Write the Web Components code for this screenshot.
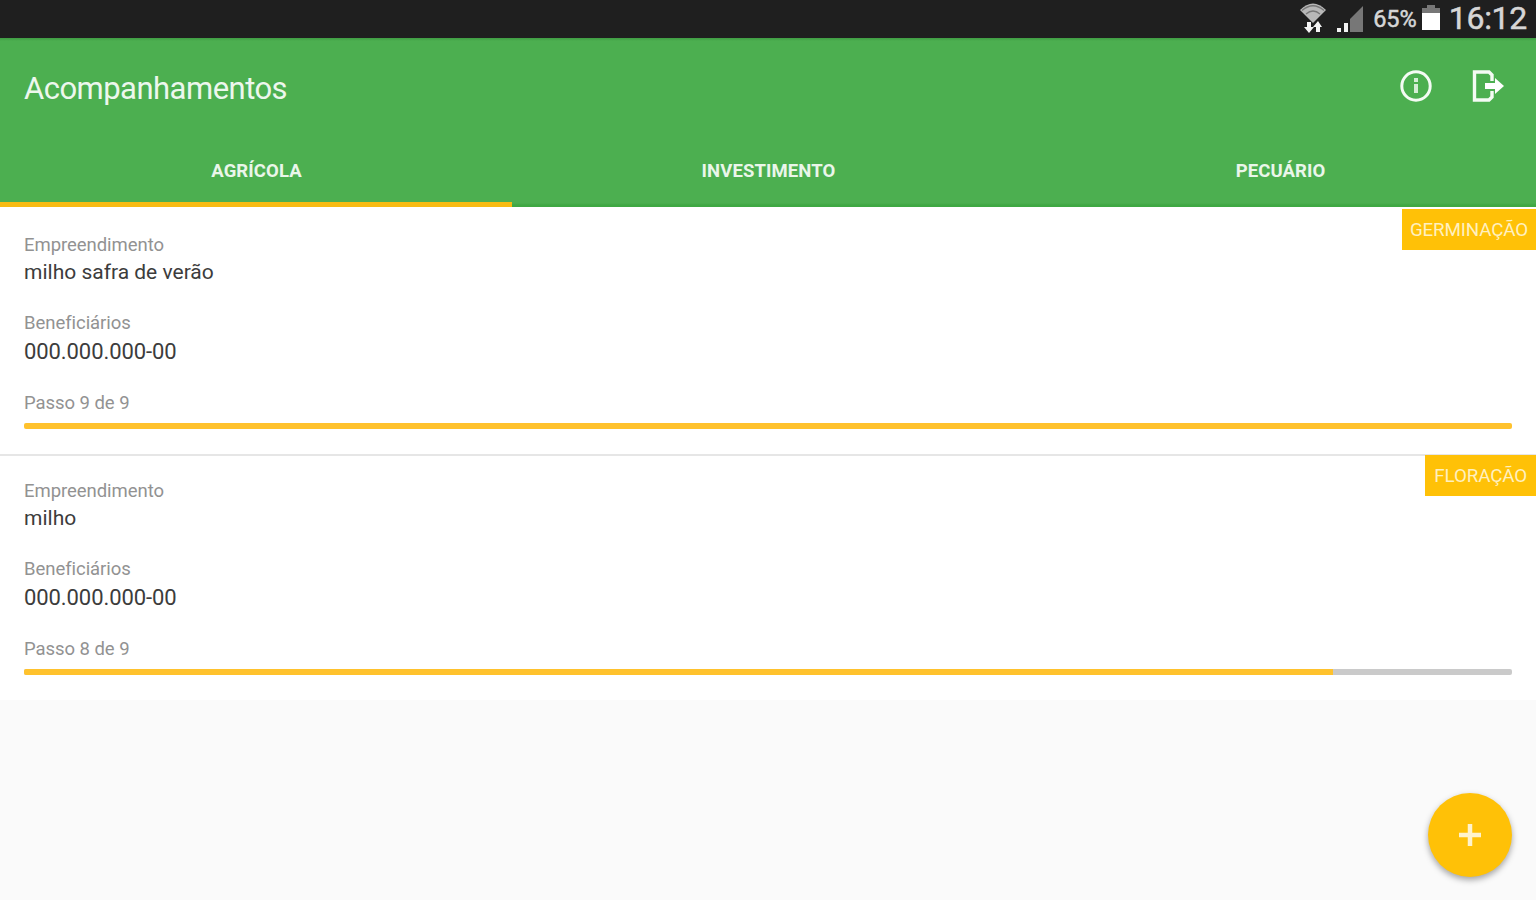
<!DOCTYPE html>
<html lang="pt-BR">
<head>
<meta charset="utf-8">
<title>Acompanhamentos</title>
<style>
    body{
        margin: 0;
        background-color: #fafafa;
        font-family: Roboto, sans-serif;
        overflow: hidden;
    }
</style>
</head>
<body>
<main-screen>
    <status-bar slot='status' battery='65%' time='16:12'></status-bar>
    <app-header slot='header'>
        Acompanhamentos
        <tab-item slot='tabs' active>AGRÍCOLA</tab-item>
        <tab-item slot='tabs'>INVESTIMENTO</tab-item>
        <tab-item slot='tabs'>PECUÁRIO</tab-item>
    </app-header>
    <follow-card step='9' total='9'>
        <span slot='badge'>GERMINAÇÃO</span>
        <span slot='name'>milho safra de verão</span>
        <span slot='owner'>000.000.000-00</span>
    </follow-card>
    <follow-card step='8' total='9'>
        <span slot='badge'>FLORAÇÃO</span>
        <span slot='name'>milho</span>
        <span slot='owner'>000.000.000-00</span>
    </follow-card>
    <add-button slot='action'></add-button>
</main-screen>

<script>
const screenTemplate = document.createElement('template');
screenTemplate.innerHTML = `
    <style>
        :host{
            display: flex;
            flex-direction: column;
            height: 900px;
        }
        .list{
            flex: 1;
        }
    </style>
    <slot name='status'></slot>
    <slot name='header'></slot>
    <div class='list'><slot></slot></div>
    <slot name='action'></slot>
`;

const statusTemplate = document.createElement('template');
statusTemplate.innerHTML = `
    <style>
        :host{
            display: flex;
            justify-content: flex-end;
            align-items: center;
            box-sizing: border-box;
            height: 38px;
            padding-right: 9px;
            background-color: #1f1f1f;
            color: #d6d6d6;
        }
        svg{
            display: block;
            margin-bottom: 2px;
        }
        .signal{
            margin: 0 10px 1px 10px;
        }
        .battery{
            font-size: 23.5px;
            -webkit-text-stroke: .5px #d6d6d6;
        }
        .cell{
            margin: 0 9px 3px 5px;
        }
        .time{
            margin-bottom: 2px;
            font-size: 32px;
            letter-spacing: -.3px;
            -webkit-text-stroke: .5px #d6d6d6;
        }
    </style>
    <svg width='28' height='32' viewBox='0 0 28 32'>
        <path d='M1 8Q14 -5 27 8L14 21Z' fill='#b8b8b8'/>
        <path d='M3 8.500Q14 -1 25 8.500M7 12Q14 6 21 12' fill='none' stroke='#777' stroke-width='1.300'/>
        <path d='M8 20v5H5l5 6 5-6h-3v-5zM17 30v-5h-3l5-6 4 6h-2v5z' fill='#f4f4f4'/>
    </svg>
    <svg class='signal' width='26' height='27' viewBox='0 0 26 27'>
        <path d='M13 14L26 1v26H13z' fill='#777'/>
        <path d='M0 23h4v4H0zM7 18h4v9H7z' fill='#f2f2f2'/>
    </svg>
    <span class='battery'></span>
    <svg class='cell' width='18' height='25' viewBox='0 0 18 25'>
        <path d='M5 0h8v3H5zM0 3h18v5H0z' fill='#777'/>
        <path d='M0 8h18v17H0z' fill='#fff'/>
    </svg>
    <span class='time'></span>
`;

const headerTemplate = document.createElement('template');
headerTemplate.innerHTML = `
    <style>
        :host{
            display: flex;
            flex-direction: column;
            height: 169px;
            color: #fff;
            background: linear-gradient(#3f9c43, #4caf50 3px, #4caf50 165px, #3fa843 167px);
        }
        .toolbar{
            display: flex;
            align-items: center;
            height: 98px;
            padding: 0 32px 0 24px;
        }
        .title{
            flex: 1;
            padding-top: 2px;
            font-size: 31px;
            letter-spacing: -.52px;
            color: #edf7ed;
        }
        .toolbar svg{
            margin-bottom: 2px;
        }
        .toolbar .info{
            margin-right: 40px;
        }
        .tabs{
            display: grid;
            grid-template-columns: repeat(3, 1fr);
            flex: 1;
        }
    </style>
    <div class='toolbar'>
        <span class='title'><slot></slot></span>
        <svg class='info' width='32' height='32' viewBox='0 0 32 32'>
            <circle cx='16' cy='16' r='14.200' fill='none' stroke='#f4fbf4' stroke-width='3'/>
            <path d='M14 8h4v4h-4zM14 14h4v9h-4z' fill='#d5edd6'/>
        </svg>
        <svg width='32' height='34' viewBox='0 0 32 34'>
            <path d='M20 12V6L17 3H2.500V31H17L20 28V22' fill='none' stroke='#f4fbf4' stroke-width='3.400'/>
            <path d='M13 14h10V9L32 17l-9 8V20H13z' fill='#fff'/>
        </svg>
    </div>
    <div class='tabs'><slot name='tabs'></slot></div>
`;

const tabTemplate = document.createElement('template');
tabTemplate.innerHTML = `
    <style>
        :host{
            display: flex;
            align-items: center;
            justify-content: center;
            box-sizing: border-box;
            padding: 4px 0 0 1px;
            border-bottom: 5px solid transparent;
            font-size: 18.5px;
            font-weight: 700;
            letter-spacing: .1px;
            color: #eaf6ea;
            cursor: pointer;
        }
        :host([active]){
            border-bottom-color: #f8bb12;
        }
    </style>
    <slot></slot>
`;

const cardTemplate = document.createElement('template');
cardTemplate.innerHTML = `
    <style>
        :host{
            display: block;
            position: relative;
            box-sizing: border-box;
            height: 246px;
            padding: 24px 24px 0;
            background-color: #fff;
            border-top: 2px solid #e6e6e6;
        }
        :host(:first-of-type){
            height: 247px;
            padding-top: 27px;
            border-top: none;
        }
        .badge{
            position: absolute;
            top: -1px;
            right: 0;
            height: 41px;
            line-height: 42px;
            padding: 0 9px;
            background-color: #ffc107;
            color: #fff0bf;
            font-size: 18.800px;
            letter-spacing: -.15px;
        }
        :host(:first-of-type) .badge{
            top: 2px;
            padding: 0 8px;
        }
        .label{
            height: 23px;
            line-height: 23px;
            font-size: 18.5px;
            letter-spacing: -.05px;
            color: #929292;
        }
        .value{
            height: 32px;
            line-height: 31px;
            margin-bottom: 23px;
            font-size: 21px;
            color: #3c3c3c;
        }
        .owner{
            line-height: 34px;
            margin-bottom: 25px;
            font-size: 22px;
            letter-spacing: -.08px;
        }
        .track{
            height: 6px;
            margin-top: 8px;
            border-radius: 2px;
            background-color: #cacaca;
            overflow: hidden;
        }
        .bar{
            height: 100%;
            background-color: #ffc22d;
        }
    </style>
    <div class='badge'><slot name='badge'></slot></div>
    <div class='label'>Empreendimento</div>
    <div class='value'><slot name='name'></slot></div>
    <div class='label'>Beneficiários</div>
    <div class='value owner'><slot name='owner'></slot></div>
    <div class='label step'></div>
    <div class='track'><div class='bar'></div></div>
`;

const addTemplate = document.createElement('template');
addTemplate.innerHTML = `
    <style>
        :host{
            position: fixed;
            right: 24px;
            bottom: 23px;
        }
        button{
            display: flex;
            align-items: center;
            justify-content: center;
            width: 84px;
            height: 84px;
            padding: 0;
            border: none;
            border-radius: 50%;
            background-color: #ffc107;
            box-shadow: 0 3px 6px rgba(0,0,0,0.35);
            cursor: pointer;
        }
    </style>
    <button aria-label='Adicionar'>
        <svg width='22' height='22' viewBox='0 0 22 22'>
            <path d='M11 0v22M0 11h22' stroke='#fff3cd' stroke-width='4.500'/>
        </svg>
    </button>
`;

class BaseElement extends HTMLElement{
    constructor(template) {
        super();

        this.attachShadow({ mode: 'open' });
        this.shadowRoot.appendChild(template.content.cloneNode(true));
    }
}

class MainScreen extends BaseElement{
    constructor() {
        super(screenTemplate);
    }
}

class StatusBar extends BaseElement{
    constructor() {
        super(statusTemplate);
    }

    connectedCallback() {
        this.shadowRoot.querySelector('.battery').textContent = this.getAttribute('battery');
        this.shadowRoot.querySelector('.time').textContent = this.getAttribute('time');
    }
}

class AppHeader extends BaseElement{
    constructor() {
        super(headerTemplate);
    }

    connectedCallback() {
        this.addEventListener('click', (e) => {
            const tab = e.target.closest('tab-item');
            if (!tab) return;
            this.querySelectorAll('tab-item').forEach(t => t.toggleAttribute('active', t === tab));
        });
    }
}

class TabItem extends BaseElement{
    constructor() {
        super(tabTemplate);
    }
}

class FollowCard extends BaseElement{
    constructor() {
        super(cardTemplate);
    }

    connectedCallback() {
        const step = this.getAttribute('step');
        const total = this.getAttribute('total');
        // whole percents only
        const done = Math.floor(step / total * 100);
        this.shadowRoot.querySelector('.step').textContent = `Passo ${step} de ${total}`;
        this.shadowRoot.querySelector('.bar').style.width = `${done}%`;
    }
}

class AddButton extends BaseElement{
    constructor() {
        super(addTemplate);
    }
}

window.customElements.define('main-screen', MainScreen);
window.customElements.define('status-bar', StatusBar);
window.customElements.define('app-header', AppHeader);
window.customElements.define('tab-item', TabItem);
window.customElements.define('follow-card', FollowCard);
window.customElements.define('add-button', AddButton);
</script>
</body>
</html>
